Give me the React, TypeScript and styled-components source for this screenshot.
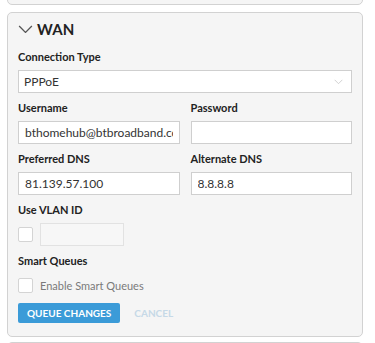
import styled, { createGlobalStyle } from "styled-components";

const GlobalStyle = createGlobalStyle`
  html, body {
    margin: 0;
    padding: 0;
    background: #ffffff;
    font-family: Lato, "Open Sans", "Liberation Sans", sans-serif;
    color: #222;
  }
  * { box-sizing: border-box; }
`;

const Stack = styled.div`
  display: flex;
  flex-direction: column;
  gap: 7px;
  padding: 0 12px 0 7px;
  overflow: hidden;
  height: 343px;
`;

const Card = styled.section`
  background: #f5f5f5;
  border: 1px solid #d2d2d2;
  border-radius: 5px;
  flex-shrink: 0;
`;

const PrevCard = styled(Card)`
  height: 20px;
  margin-top: -15px;
`;

const NextCard = styled(Card)`
  height: 30px;
  margin-top: -2px;
`;

const WanCard = styled(Card)`
  padding: 8px 10px 13px 10px;
  display: flex;
  flex-direction: column;
`;

const Header = styled.div`
  display: flex;
  align-items: center;
  gap: 4px;
  height: 16px;
  margin-bottom: 12px;
`;

const Title = styled.h2`
  margin: 0;
  font-size: 15px;
  font-weight: 700;
  color: #222;
  letter-spacing: 0.2px;
`;

const Fields = styled.div`
  display: flex;
  flex-direction: column;
  gap: 7px;
`;

const Field = styled.div`
  display: flex;
  flex-direction: column;
  min-width: 0;
`;

const Pair = styled.div`
  display: grid;
  grid-template-columns: 1fr 1fr;
  column-gap: 11px;
`;

const Label = styled.label`
  font-size: 11px;
  font-weight: 700;
  line-height: 16px;
  height: 16px;
  margin-bottom: 5px;
  color: #222;
`;

const TextInput = styled.input<{ $narrow?: boolean }>`
  height: 23px;
  width: ${(p) => (p.$narrow ? "84px" : "100%")};
  border: 1px solid ${(p) => (p.$narrow ? "#e2e2e2" : "#cfcfcf")};
  background: ${(p) => (p.$narrow ? "#f7f7f7" : "#ffffff")};
  font-family: inherit;
  font-size: 12px;
  color: #333;
  padding: 0 6px;
  outline: none;
  border-radius: 0;
`;

const SelectBox = styled.div`
  height: 23px;
  border: 1px solid #cfcfcf;
  background: #ffffff;
  display: flex;
  align-items: center;
  justify-content: space-between;
  padding: 0 8px 0 5px;
  font-size: 12px;
  color: #333;
`;

const CheckRow = styled.div`
  display: flex;
  align-items: center;
  gap: 7px;
  height: 23px;
`;

const Check = styled.span`
  width: 15px;
  height: 15px;
  border: 1px solid #d4d4d4;
  background: #ffffff;
  border-radius: 2px;
  flex-shrink: 0;
`;

const CheckText = styled.span`
  font-size: 11px;
  color: #7a7a7a;
`;

const Actions = styled.div`
  display: flex;
  align-items: center;
  gap: 14px;
  margin-top: -1px;
`;

const PrimaryButton = styled.button`
  height: 20px;
  padding: 0 9px;
  border: none;
  border-radius: 2px;
  background: #3b9bd8;
  color: #fff;
  font-family: inherit;
  font-size: 10px;
  font-weight: 700;
`;

const GhostButton = styled.button`
  height: 20px;
  padding: 0;
  border: none;
  background: transparent;
  color: #c6d9e7;
  font-family: inherit;
  font-size: 10px;
  font-weight: 700;
`;

function Chevron({ color, size }: { color: string; size: number }) {
  return (
    <svg width={size} height={size / 2 + 1} viewBox="0 0 14 8" fill="none">
      <path d="M1 1 L7 7 L13 1" stroke={color} strokeWidth="1.2" />
    </svg>
  );
}

export default function App() {
  return (
    <>
      <GlobalStyle />
      <Stack>
        <PrevCard />
        <WanCard>
          <Header>
            <Chevron color="#555" size={15} />
            <Title>WAN</Title>
          </Header>
          <Fields>
            <Field>
              <Label>Connection Type</Label>
              <SelectBox>
                <span>PPPoE</span>
                <Chevron color="#c4c4c4" size={9} />
              </SelectBox>
            </Field>
            <Pair>
              <Field>
                <Label>Username</Label>
                <TextInput defaultValue="bthomehub@btbroadband.com" />
              </Field>
              <Field>
                <Label>Password</Label>
                <TextInput type="password" defaultValue="" />
              </Field>
            </Pair>
            <Pair>
              <Field>
                <Label>Preferred DNS</Label>
                <TextInput defaultValue="81.139.57.100" />
              </Field>
              <Field>
                <Label>Alternate DNS</Label>
                <TextInput defaultValue="8.8.8.8" />
              </Field>
            </Pair>
            <Field>
              <Label>Use VLAN ID</Label>
              <CheckRow>
                <Check />
                <TextInput $narrow disabled />
              </CheckRow>
            </Field>
            <Field>
              <Label>Smart Queues</Label>
              <CheckRow>
                <Check />
                <CheckText>Enable Smart Queues</CheckText>
              </CheckRow>
            </Field>
            <Actions>
              <PrimaryButton>QUEUE CHANGES</PrimaryButton>
              <GhostButton>CANCEL</GhostButton>
            </Actions>
          </Fields>
        </WanCard>
        <NextCard />
      </Stack>
    </>
  );
}
